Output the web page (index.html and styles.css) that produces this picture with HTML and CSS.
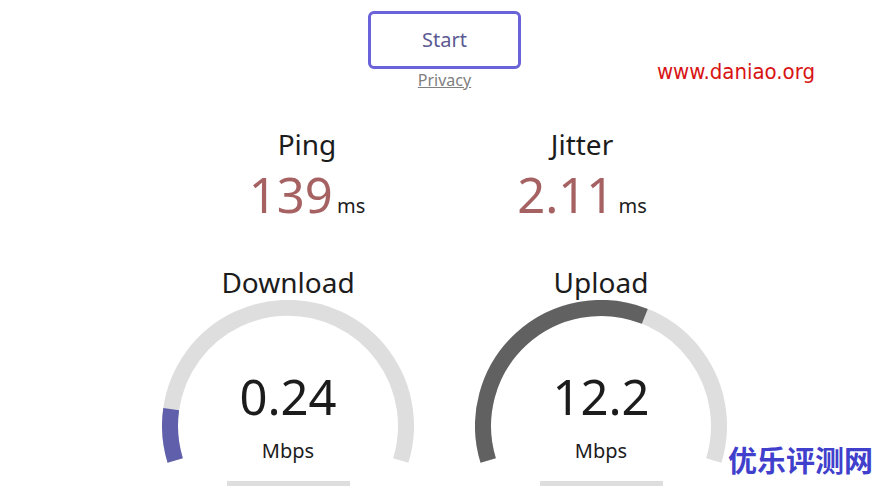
FILE: index.html
```
<!DOCTYPE html>
<html lang="en">
  <head>
    <meta charset="UTF-8" />
    <meta name="viewport" content="width=device-width, initial-scale=1.0" />
    <title>Speed Test</title>
    <link rel="stylesheet" href="styles.css">
  </head>
  <body>
    <main class="speedtest">
      <div class="controls">
        <button type="button" class="start-btn">Start</button>
        <a class="privacy" href="#privacy">Privacy</a>
      </div>

      <section class="latency">
        <div class="latency-item">
          <h2>Ping</h2>
          <p><span class="latency-value">139</span> <span class="unit">ms</span></p>
        </div>
        <div class="latency-item">
          <h2>Jitter</h2>
          <p><span class="latency-value">2.11</span> <span class="unit">ms</span></p>
        </div>
      </section>

      <section class="gauges">
        <div class="gauge">
          <h2>Download</h2>
          <div class="dial">
            <svg viewBox="0 0 252 164" aria-hidden="true">
              <path class="track" d="M13.2 160.5 A118 118 0 1 1 238.8 160.5" />
              <path class="fill-download" d="M13.2 160.5 A118 118 0 0 1 9.2 109.2" />
            </svg>
            <p class="speed">0.24</p>
            <p class="unit">Mbps</p>
          </div>
          <div class="progress"></div>
        </div>
        <div class="gauge">
          <h2>Upload</h2>
          <div class="dial">
            <svg viewBox="0 0 252 164" aria-hidden="true">
              <path class="track" d="M13.2 160.5 A118 118 0 1 1 238.8 160.5" />
              <path class="fill-upload" d="M13.2 160.5 A118 118 0 0 1 169.8 16.4" />
            </svg>
            <p class="speed">12.2</p>
            <p class="unit">Mbps</p>
          </div>
          <div class="progress"></div>
        </div>
      </section>
    </main>

    <div class="site-url">www.daniao.org</div>
    <div class="site-name" lang="zh-CN">优乐评测网</div>
  </body>
</html>
```

FILE: styles.css
```
body {
    margin: 0;
    background: #fff;
    color: #1c1c1c;
    font-family: "Noto Sans", "Open Sans", sans-serif;
}
.speedtest {
    padding: 11px 0 0 4px;
}
h2, p {
    margin: 0;
}
h2 {
    font-size: 28px;
    line-height: 36px;
    font-weight: normal;
}
.unit {
    font-size: 20px;
    line-height: 28px;
}
.controls {
    display: flex;
    flex-direction: column;
    align-items: center;
}
.start-btn {
    padding: 12px 51px;
    border: 3px solid #6a62d8;
    border-radius: 6px;
    background: #fff;
    color: #5b5a92;
    font-family: inherit;
    font-size: 20px;
    line-height: 28px;
    cursor: pointer;
}
.privacy {
    color: #808080;
    font-size: 16px;
    line-height: 22px;
}
.latency {
    display: flex;
    justify-content: center;
    margin-top: 35px;
    text-align: center;
}
.latency-item {
    width: 275px;
}
.latency-value {
    color: #a66262;
    font-size: 49px;
    line-height: 64px;
}
.gauges {
    display: flex;
    justify-content: center;
    gap: 61px;
    margin-top: 38px;
    text-align: center;
}
.gauge {
    display: flex;
    flex-direction: column;
    align-items: center;
    width: 252px;
}
.dial {
    display: grid;
    width: 100%;
    grid-template-rows: 64px 64px 36px;
}
.dial svg {
    grid-area: 1 / 1 / 4 / 2;
    width: 100%;
}
.dial path {
    fill: none;
    stroke-width: 16;
}
.dial .track {
    stroke: #dedede;
}
.dial .fill-download {
    stroke: #605fab;
}
.dial .fill-upload {
    stroke: #616161;
}
.speed {
    grid-area: 2 / 1;
    font-size: 49px;
    line-height: 64px;
}
.dial .unit {
    grid-area: 3 / 1;
    padding-top: 9px;
}
.progress {
    width: 123px;
    height: 5px;
    margin-top: 17px;
    background: #dedede;
}
/* site marks laid over the page */
.site-url {
    position: absolute;
    top: 58px;
    right: 70px;
    color: #d81414;
    font-family: "DejaVu Sans Condensed", "DejaVu Sans", sans-serif;
    font-size: 22px;
    line-height: 28px;
}
.site-name {
    position: absolute;
    right: 12px;
    bottom: 9px;
    color: #4040cc;
    font-family: "Noto Sans CJK SC", sans-serif;
    font-size: 29px;
    font-weight: bold;
    line-height: 40px;
}
```
